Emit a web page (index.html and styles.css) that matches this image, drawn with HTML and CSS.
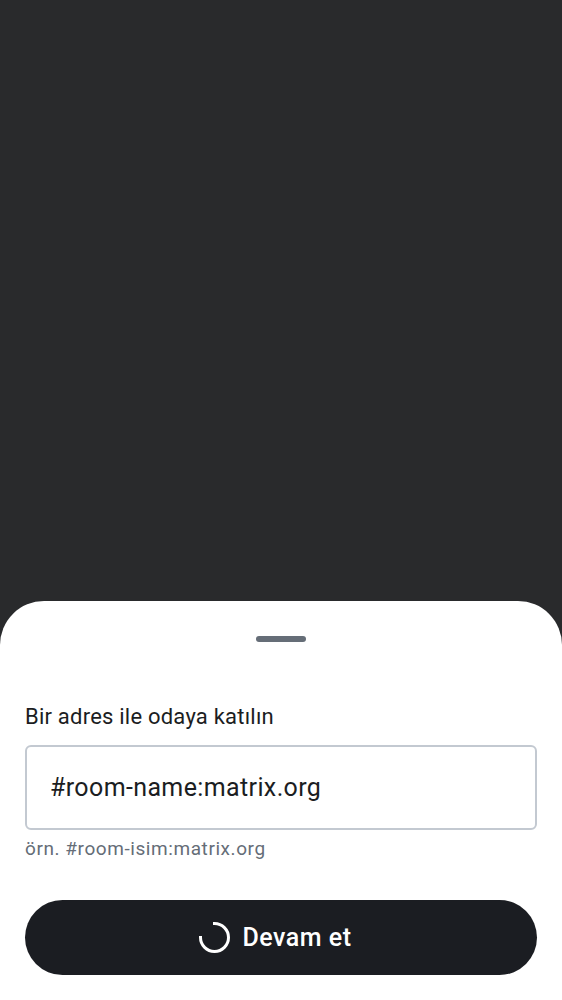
FILE: index.html
```html
<!DOCTYPE html>
<html lang="tr">
<head>
<meta charset="utf-8">
<meta name="viewport" content="width=device-width, initial-scale=1">
<title>Odaya katıl</title>
<link rel="stylesheet" href="styles.css">
</head>
<body>
<main class="scrim">
  <section class="sheet">
    <div class="handle"></div>
    <form class="form">
      <label class="label" for="address">Bir adres ile odaya katılın</label>
      <input class="field" id="address" type="text" value="#room-name:matrix.org" aria-describedby="hint">
      <p class="hint" id="hint">örn. #room-isim:matrix.org</p>
      <button class="submit" type="button">
        <svg class="spinner" viewBox="0 0 32 32" aria-hidden="true"><path d="M15.5 1.5A14 14 0 1 1 1.5 15.5" fill="none" stroke="currentColor" stroke-width="3" stroke-linecap="square"/></svg>
        <span>Devam et</span>
      </button>
    </form>
  </section>
</main>
</body>
</html>
```
FILE: styles.css
```css
* {
  box-sizing: border-box;
}

body {
  margin: 0;
  font-family: Roboto, sans-serif;
  color: #1b1d22;
}

.scrim {
  display: flex;
  flex-direction: column;
  justify-content: flex-end;
  min-height: 100vh;
  background: #292a2c;
}

.sheet {
  padding: 35px 25px 25px;
  border-radius: 44px 44px 0 0;
  background: #fff;
}

.handle {
  width: 50px;
  height: 6px;
  margin: 0 auto;
  border-radius: 3px;
  background: #656d77;
}

.form {
  display: flex;
  flex-direction: column;
  padding-top: 58px;
}

.label {
  margin-bottom: 11px;
  font-size: 22px;
  line-height: 34px;
  letter-spacing: 0.01em;
}

.field {
  width: 100%;
  height: 85px;
  padding: 0 23px;
  border: 2px solid #c3c9d1;
  border-radius: 6px;
  background: #fff;
  color: inherit;
  font: 400 25px/38px Roboto, sans-serif;
  letter-spacing: 0.015em;
  outline: 0;
}

.hint {
  margin: 6px 0 38px;
  font-size: 19px;
  line-height: 26px;
  letter-spacing: 0.03em;
  color: #656d77;
}

.submit {
  display: flex;
  align-items: center;
  justify-content: center;
  gap: 12px;
  height: 75px;
  padding: 0 36px 0 24px;
  border: 0;
  border-radius: 38px;
  background: #1b1d22;
  color: #fff;
  font: 500 25px/38px Roboto, sans-serif;
  letter-spacing: 0.02em;
}

.spinner {
  width: 32px;
  height: 32px;
}
```
